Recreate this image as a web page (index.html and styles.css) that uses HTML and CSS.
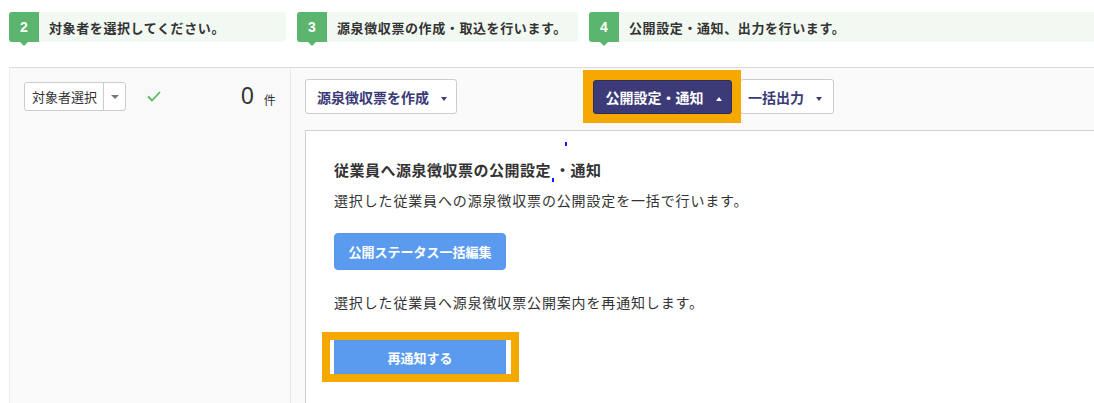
FILE: index.html
```html
<!DOCTYPE html>
<html lang="ja">
<head>
    <meta charset="UTF-8">
    <meta name="viewport" content="width=device-width, initial-scale=1.0">
    <title>源泉徴収票 公開設定・通知</title>
    <link rel="stylesheet" href="styles.css">
</head>
<body>
    <div class="steps">
        <div class="step step-2">
            <span class="step-num">2</span>
            <span class="step-text">対象者を選択してください。</span>
        </div>
        <div class="step step-3">
            <span class="step-num">3</span>
            <span class="step-text">源泉徴収票の作成・取込を行います。</span>
        </div>
        <div class="step step-4">
            <span class="step-num">4</span>
            <span class="step-text">公開設定・通知、出力を行います。</span>
        </div>
    </div>

    <div class="main">
        <aside class="side">
            <div class="side-row">
                <div class="select">
                    <span class="select-label">対象者選択</span>
                    <span class="select-caret"></span>
                </div>
                <svg class="check" width="14" height="11" viewBox="0 0 14 11">
                    <path d="M1 5.5 L5 9.5 L13 1" fill="none" stroke="#5cb85c" stroke-width="1.8"/>
                </svg>
                <span class="count">0</span>
                <span class="count-unit">件</span>
            </div>
        </aside>

        <section class="content">
            <div class="toolbar">
                <button class="btn btn-outline">源泉徴収票を作成 <span class="caret"></span></button>
                <div class="btn-group">
                    <div class="highlight-wrap">
                        <button class="btn btn-dark">公開設定・通知 <span class="caret caret-up"></span></button>
                    </div>
                    <button class="btn btn-outline btn-export">一括出力 <span class="caret"></span></button>
                </div>
            </div>

            <div class="panel">
                <span class="cursor-dot"></span>
                <h3 class="panel-title">従業員へ源泉徴収票の公開設定<span class="cursor-mark"></span>・通知</h3>
                <p class="panel-text">選択した従業員への源泉徴収票の公開設定を一括で行います。</p>
                <button class="btn btn-blue">公開ステータス一括編集</button>
                <p class="panel-text text-second">選択した従業員へ源泉徴収票公開案内を再通知します。</p>
                <div class="highlight-box">
                    <button class="btn btn-blue btn-short">再通知する</button>
                </div>
            </div>
        </section>
    </div>
</body>
</html>
```

FILE: styles.css
```css
body {
    font-family: "Noto Sans CJK JP", "Noto Sans", sans-serif;
    margin: 0;
    padding: 12px 0 0 9px;
    color: #333;
    background-color: #fff;
    overflow: hidden;
}

/* ステップ表示 */
.steps {
    display: flex;
    gap: 11px;
}

.step {
    display: flex;
    align-items: center;
    height: 30px;
    background-color: #f2f8f2;
    border-radius: 3px;
}

.step-2 { width: 277px; }
.step-3 { width: 281px; }
.step-4 { flex: 1; border-radius: 3px 0 0 3px; }

.step-num {
    position: relative;
    width: 30px;
    height: 30px;
    line-height: 30px;
    text-align: center;
    background-color: #5cb56e;
    color: #fff;
    font-family: "Liberation Sans", Arial, sans-serif;
    font-weight: bold;
    font-size: 14px;
    border-radius: 3px 0 0 3px;
}

.step-num::after {
    content: "";
    position: absolute;
    left: 11px;
    bottom: -4px;
    border-left: 4px solid transparent;
    border-right: 4px solid transparent;
    border-top: 4px solid #5cb56e;
}

.step-text {
    margin-left: 10px;
    font-size: 13px;
    letter-spacing: 0.6px;
    font-weight: bold;
    color: #333;
}

/* メイン */
.main {
    display: flex;
    margin-top: 25px;
    height: 335px;
    border-top: 1px solid #dcdcdc;
    border-left: 1px solid #ececec;
}

.side {
    width: 280px;
    background-color: #f9f9f9;
    border-right: 1px solid #e8e8e8;
}

.side-row {
    display: flex;
    align-items: center;
    padding: 14px 0 0 14px;
}

.select {
    display: flex;
    align-items: center;
    width: 100px;
    height: 27px;
    background-color: #fff;
    border: 1px solid #ccc;
    border-radius: 3px;
}

.select-label {
    font-size: 13px;
    padding: 0 6px 0 7px;
    color: #333;
}

.select-caret {
    flex: 1;
    height: 100%;
    border-left: 1px solid #ccc;
    display: flex;
    align-items: center;
    justify-content: center;
}

.select-caret::before {
    content: "";
    border-left: 4px solid transparent;
    border-right: 4px solid transparent;
    border-top: 4px solid #777;
}

.check {
    margin-left: 21px;
}

.count {
    margin-left: 80px;
    font-family: "Liberation Sans", Arial, sans-serif;
    font-size: 23px;
    color: #333;
}

.count-unit {
    margin-left: 10px;
    margin-top: 5px;
    font-size: 12px;
}

.content {
    flex: 1;
    background-color: #fafafa;
}

.toolbar {
    display: flex;
    align-items: flex-start;
    height: 51px;
    padding: 11px 0 0 14px;
}

.btn {
    font-family: "Noto Sans CJK JP", "Noto Sans", sans-serif;
    font-size: 13px;
    font-weight: bold;
    border-radius: 3px;
    cursor: pointer;
}

.btn-outline {
    height: 35px;
    width: 152px;
    padding: 0 0 0 2px;
    background-color: #fff;
    border: 1px solid #ccc;
    color: #3b3a78;
    font-size: 14px;
}

.btn-group {
    display: flex;
    margin-left: 126px;
}

.highlight-wrap {
    position: relative;
    z-index: 1;
    padding: 10px 9px 9px 10px;
    margin-top: -9px;
    background-color: #f5a800;
}

.btn-dark {
    display: block;
    height: 34px;
    width: 139px;
    padding: 0 0 0 2px;
    background-color: #3d3a78;
    border: 1px solid #2e2c60;
    color: #fff;
    font-size: 14px;
}

.btn-export {
    width: 94px;
    margin-left: -1px;
    padding: 0 0 0 7px;
    text-align: left;
}

.caret {
    display: inline-block;
    margin-left: 9px;
    vertical-align: middle;
    border-left: 3.5px solid transparent;
    border-right: 3.5px solid transparent;
    border-top: 4px solid #3b3a78;
}

.caret-up {
    border-top: none;
    border-bottom: 4px solid #fff;
}

/* パネル */
.panel {
    position: relative;
    margin-left: 14px;
    height: 245px;
    padding: 27px 0 0 28px;
    background-color: #fff;
    border-top: 1px solid #cfcfcf;
    border-left: 1px solid #cfcfcf;
}

.panel-title {
    margin: 0;
    font-size: 15px;
    letter-spacing: 0.5px;
    font-weight: bold;
    color: #333;
    line-height: 24px;
}

.panel-text {
    margin: 8px 0 0;
    font-size: 14px;
    letter-spacing: 0.85px;
    color: #333;
    line-height: 20px;
}

.btn-blue {
    height: 37px;
    width: 172px;
    margin-top: 23px;
    background-color: #5b9bef;
    border: 1px solid #5896ea;
    border-radius: 4px;
    color: #fff;
}

.text-second {
    margin-top: 22px;
}

.highlight-box {
    display: inline-block;
    margin: 20px 0 0 -12px;
    padding: 0 5px 0 4px;
    background-color: #fff;
    border: 8px solid #f5a800;
}

.btn-short {
    display: block;
    height: 34px;
    margin: 0;
    border-radius: 0;
}

/* カーソルの跡 */
.cursor-dot {
    position: absolute;
    top: 11px;
    left: 259px;
    width: 2px;
    height: 4px;
    background-color: #1a1aff;
}

.cursor-mark {
    display: inline-block;
    width: 2px;
    height: 4px;
    margin: 0 1px;
    vertical-align: -6px;
    background-color: #1a1aff;
}
```
